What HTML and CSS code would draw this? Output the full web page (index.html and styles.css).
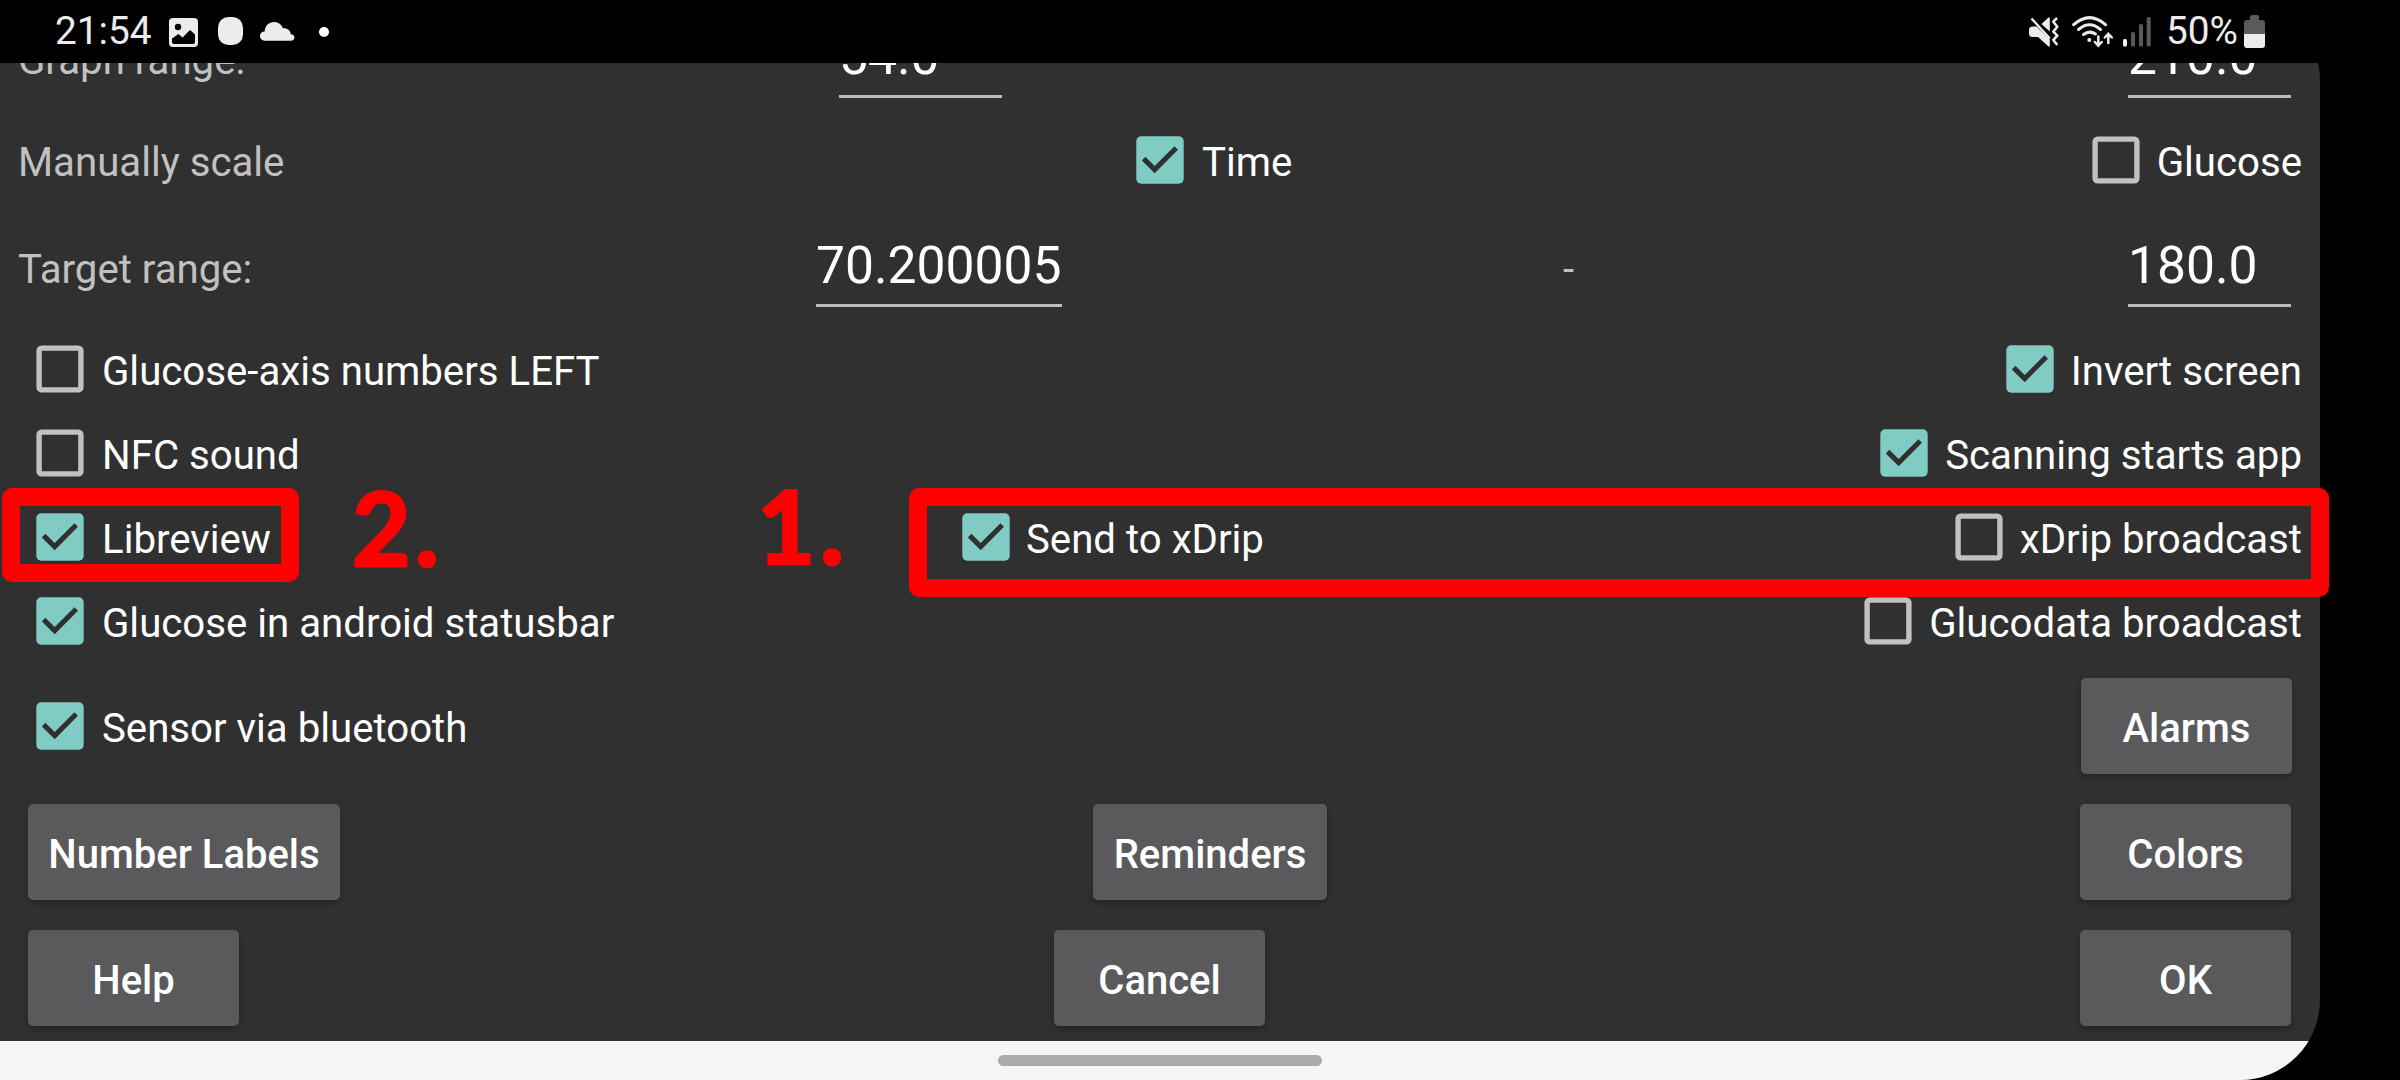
FILE: index.html
```
<!DOCTYPE html>
<html lang="en">
<head>
<meta charset="utf-8">
<title>Settings</title>
<link rel="stylesheet" href="styles.css">
</head>
<body>
<svg class="defs" width="0" height="0">
  <symbol id="on" viewBox="0 0 48 48"><rect x=".3" y=".3" width="47.4" height="47.4" rx="5" fill="#80cbc4"/><path d="M7.6 22.6 L18.7 33.6 L40.2 12.1" fill="none" stroke="#303030" stroke-width="5"/></symbol>
  <symbol id="off" viewBox="0 0 48 48"><rect x="3.1" y="3.1" width="41.8" height="41.8" rx="2.5" fill="none" stroke="#c1c1c1" stroke-width="5.4"/></symbol>
</svg>
<header class="status">
  <span class="clock">21:54</span>
  <svg class="ic-image" width="29" height="29" viewBox="0 0 29 29"><rect width="29" height="29" rx="4" fill="#ececec"/><circle cx="9" cy="9" r="3.2"/><path d="M3 20.5 L9.5 16 L13.5 19.5 L21 12 L26 16.500 V24 Q26 26 24 26 H5 Q3 26 3 24 Z"/></svg>
  <svg class="ic-blob" width="25" height="28" viewBox="0 0 25 28"><rect width="25" height="28" rx="10.500" fill="#ececec"/></svg>
  <svg class="ic-cloud" width="35" height="19" viewBox="0 0 35 19"><path d="M4.500 18.700 A4.600 4.600 0 0 1 4.600 9.500 C5 3.500 9 0 14 0 C18.500 0 21.500 2.600 23 6.300 C27.500 6 30.500 8.500 30.800 12.200 C33 12.400 34.500 13.800 34.500 15.500 C34.500 17.500 33 18.700 31 18.700 Z" fill="#ececec"/></svg>
  <span class="more"></span>
  <svg class="ic-mute" width="30" height="30" viewBox="0 0 30 30" fill="#ececec"><path d="M0 13 Q0 9.500 3.500 9.500 H7.500 L20.800 22.500 V29.500 H19.500 L9 20 H3.500 Q0 20 0 16.500 Z"/><path d="M12.500 7 L19.500 .5 H20.800 V14.500 Z"/><path d="M2.500 1.500 L20.800 21.500" stroke="#ececec" stroke-width="2.400"/><path d="M28 1 L24.300 4.700 L28.300 9.700 L24.300 14.700 L28.300 18.700 L24.300 23 L28.300 28" fill="none" stroke="#ececec" stroke-width="2.600" stroke-linejoin="round"/></svg>
  <svg class="ic-wifi" width="42" height="32" viewBox="0 0 42 32" fill="none" stroke="#ececec" stroke-width="3" stroke-linecap="round"><path d="M1.700 8.700 Q17.500 -5.500 33.500 8.700"/><path d="M6.500 13.500 Q17.500 4 28.500 13.500"/><path d="M11.500 18.500 Q17.500 14 23.500 18"/><circle cx="17.300" cy="24" r="2" fill="#ececec" stroke="none"/><path d="M26.300 20.500 V29 M22.800 26 L26.300 29.700 L29.800 26 M36.300 27 V18.500 M32.800 21.500 L36.300 17.800 L39.800 21.500" stroke-width="2.500"/></svg>
  <svg class="ic-signal" width="28" height="30" viewBox="0 0 28 30"><rect y="22" width="4" height="7.500" rx="1.500" fill="#f2f2f2"/><g fill="#5a5a5a"><rect x="8" y="15" width="4" height="14.500" rx="1.500"/><rect x="16" y="7" width="4" height="22.500" rx="1.500"/><rect x="23.700" y="0" width="4" height="29.500" rx="1.500"/></g></svg>
  <span class="pct">50%</span>
  <svg class="ic-batt" width="21" height="33" viewBox="0 0 21 33"><path d="M6 5 V2 Q6 0 8 0 H13 Q15 0 15 2 V5 H18 Q21 5 21 8 V19 H0 V8 Q0 5 3 5 Z" fill="#5a5a5a"/><path d="M0 19 H21 V30 Q21 33 18 33 H3 Q0 33 0 30 Z" fill="#ececec"/></svg>
</header>
<main class="screen">
  <section class="settings">
    <div class="row range graph"><span class="dim">Graph range:</span><span class="edit e54">54.0</span><span class="dim dash">-</span><span class="edit last">210.0</span></div>
    <div class="row"><span class="dim">Manually scale</span><label class="check time"><svg><use href="#on"/></svg><span>Time</span></label><label class="check end"><svg><use href="#off"/></svg><span>Glucose</span></label></div>
    <div class="row range"><span class="dim">Target range:</span><span class="edit e70">70.200005</span><span class="dim dash">-</span><span class="edit last">180.0</span></div>
    <div class="row"><label class="check"><svg><use href="#off"/></svg><span>Glucose-axis numbers LEFT</span></label><label class="check end"><svg><use href="#on"/></svg><span>Invert screen</span></label></div>
    <div class="row"><label class="check"><svg><use href="#off"/></svg><span>NFC sound</span></label><label class="check end"><svg><use href="#on"/></svg><span>Scanning starts app</span></label></div>
    <div class="row three"><label class="check"><svg><use href="#on"/></svg><span>Libreview</span></label><label class="check send"><svg><use href="#on"/></svg><span>Send to xDrip</span></label><label class="check end"><svg><use href="#off"/></svg><span>xDrip broadcast</span></label></div>
    <div class="row"><label class="check"><svg><use href="#on"/></svg><span>Glucose in android statusbar</span></label><label class="check end"><svg><use href="#off"/></svg><span>Glucodata broadcast</span></label></div>
    <div class="row tall"><label class="check"><svg><use href="#on"/></svg><span>Sensor via bluetooth</span></label><button class="btn alarms">Alarms</button></div>
    <div class="row tall actions"><button class="btn labels">Number Labels</button><button class="btn reminders">Reminders</button><button class="btn">Colors</button></div>
    <div class="row tall actions"><button class="btn">Help</button><button class="btn">Cancel</button><button class="btn">OK</button></div>
  </section>
  <nav class="nav"><span class="pill"></span></nav>
</main>
<div class="mark mark-left"></div>
<div class="mark mark-right"></div>
<svg class="num num-two" width="120" height="130"><text x="12 75" y="105.5">2.</text></svg>
<svg class="num num-one" width="120" height="130"><text x="7 70" y="103.500">1.</text></svg>
</body>
</html>
```
FILE: styles.css
```
* { box-sizing: border-box; }
body {
  margin: 0;
  width: 2400px;
  height: 1080px;
  overflow: hidden;
  position: relative;
  background: #000;
  color: #fff;
  font-family: Roboto, "Liberation Sans", sans-serif;
  font-size: 40.2px;
}
.defs { position: absolute; }

/* Status bar sits over the scrolled settings */
.status {
  position: absolute;
  z-index: 1;
  inset: 0 0 auto 0;
  height: 63px;
  background: #000;
  color: #ececec;
  display: flex;
  align-items: flex-start;
  font-size: 38.8px;
  line-height: 46px;
}
.status svg { flex: none; }
.clock { margin: 8px 0 0 55px; width: 114px; white-space: nowrap; }
.ic-image { margin-top: 18px; }
.ic-blob { margin: 17px 0 0 20px; }
.ic-cloud { margin: 22px 0 0 17px; }
.more { margin: 27px 0 0 24px; width: 10px; height: 10px; border-radius: 50%; background: #fff; }
.ic-mute { margin: 17px 0 0 1700px; }
.ic-wifi { margin: 16px 0 0 13px; }
.ic-signal { margin: 17px 0 0 9px; }
.pct { margin: 8px 0 0 15px; width: 78px; white-space: nowrap; }
.ic-batt { margin-top: 15px; }

.screen {
  width: 2320px;
  height: 1080px;
  border-radius: 0 80px 80px 0;
  overflow: hidden;
  background: #303030;
  display: flex;
  flex-direction: column;
}
.settings { height: 1041px; flex: none; }
.row {
  display: flex;
  align-items: center;
  height: 84px;
  padding: 0 18px;
  white-space: nowrap;
}
.row.range { height: 125px; align-items: flex-start; padding-right: 29px; }
.row.graph { margin-top: -7px; }
.row.tall { height: 126px; }
.dim { color: #c1c1c1; width: 400px; padding-top: 4px; }
.range .dim { padding-top: 44px; line-height: 48px; }
.range .dash { width: 20px; margin-left: auto; }
.edit {
  width: 163px;
  height: 70px;
  margin-top: 35px;
  border-bottom: 3px solid #bdbbbc;
  font-size: 51.6px;
  line-height: 58px;
}
.e54 { margin-left: 421px; }
.e70 { margin-left: 398px; width: 246px; }
.edit.last { margin-left: 545px; }
.graph .last { margin-left: 575px; }

.check { display: flex; align-items: center; gap: 18px; padding-left: 18px; }
.check svg { width: 48px; height: 48px; flex: none; }
.check span { padding-top: 4px; }
.check.end { margin-left: auto; gap: 17px; }
.time { margin-left: 700px; }

/* Three options: the outer ones hug the edges, the middle one starts at a fixed column */
.row.three { display: grid; grid-template-columns: 926px 1fr auto; }
.send { gap: 16px; }

.btn {
  width: 211px;
  height: 96px;
  padding: 4px 0 0;
  border: 0;
  border-radius: 5px;
  background: #5a5a5c;
  box-shadow: 0 3px 6px rgba(0, 0, 0, .25);
  color: #fff;
  font: 500 40px Roboto, "Liberation Sans", sans-serif;
}
.row.actions { padding: 0 29px 0 28px; justify-content: space-between; }
.alarms { margin: 0 10px 0 auto; }
.labels { width: 312px; }
.reminders { width: 234px; }

.nav { flex: 1; background: #f5f5f5; padding: 14px 0 0 998px; }
.pill { display: block; width: 324px; height: 11px; border-radius: 6px; background: #aaa; }

/* Annotations drawn over the settings */
.mark { position: absolute; border: 18.5px solid #f00; border-radius: 10px; }
.mark-left { left: 2px; top: 488px; width: 297px; height: 94px; }
.mark-right { left: 909px; top: 488px; width: 1420px; height: 109px; }
.num {
  position: absolute;
  fill: #f00;
  stroke: #f00;
  stroke-width: 3px;
  stroke-linejoin: round;
  font: 700 101px Lato, sans-serif;
}
.num-two { left: 340px; top: 460px; }
.num-one { left: 750px; top: 460px; }
```
